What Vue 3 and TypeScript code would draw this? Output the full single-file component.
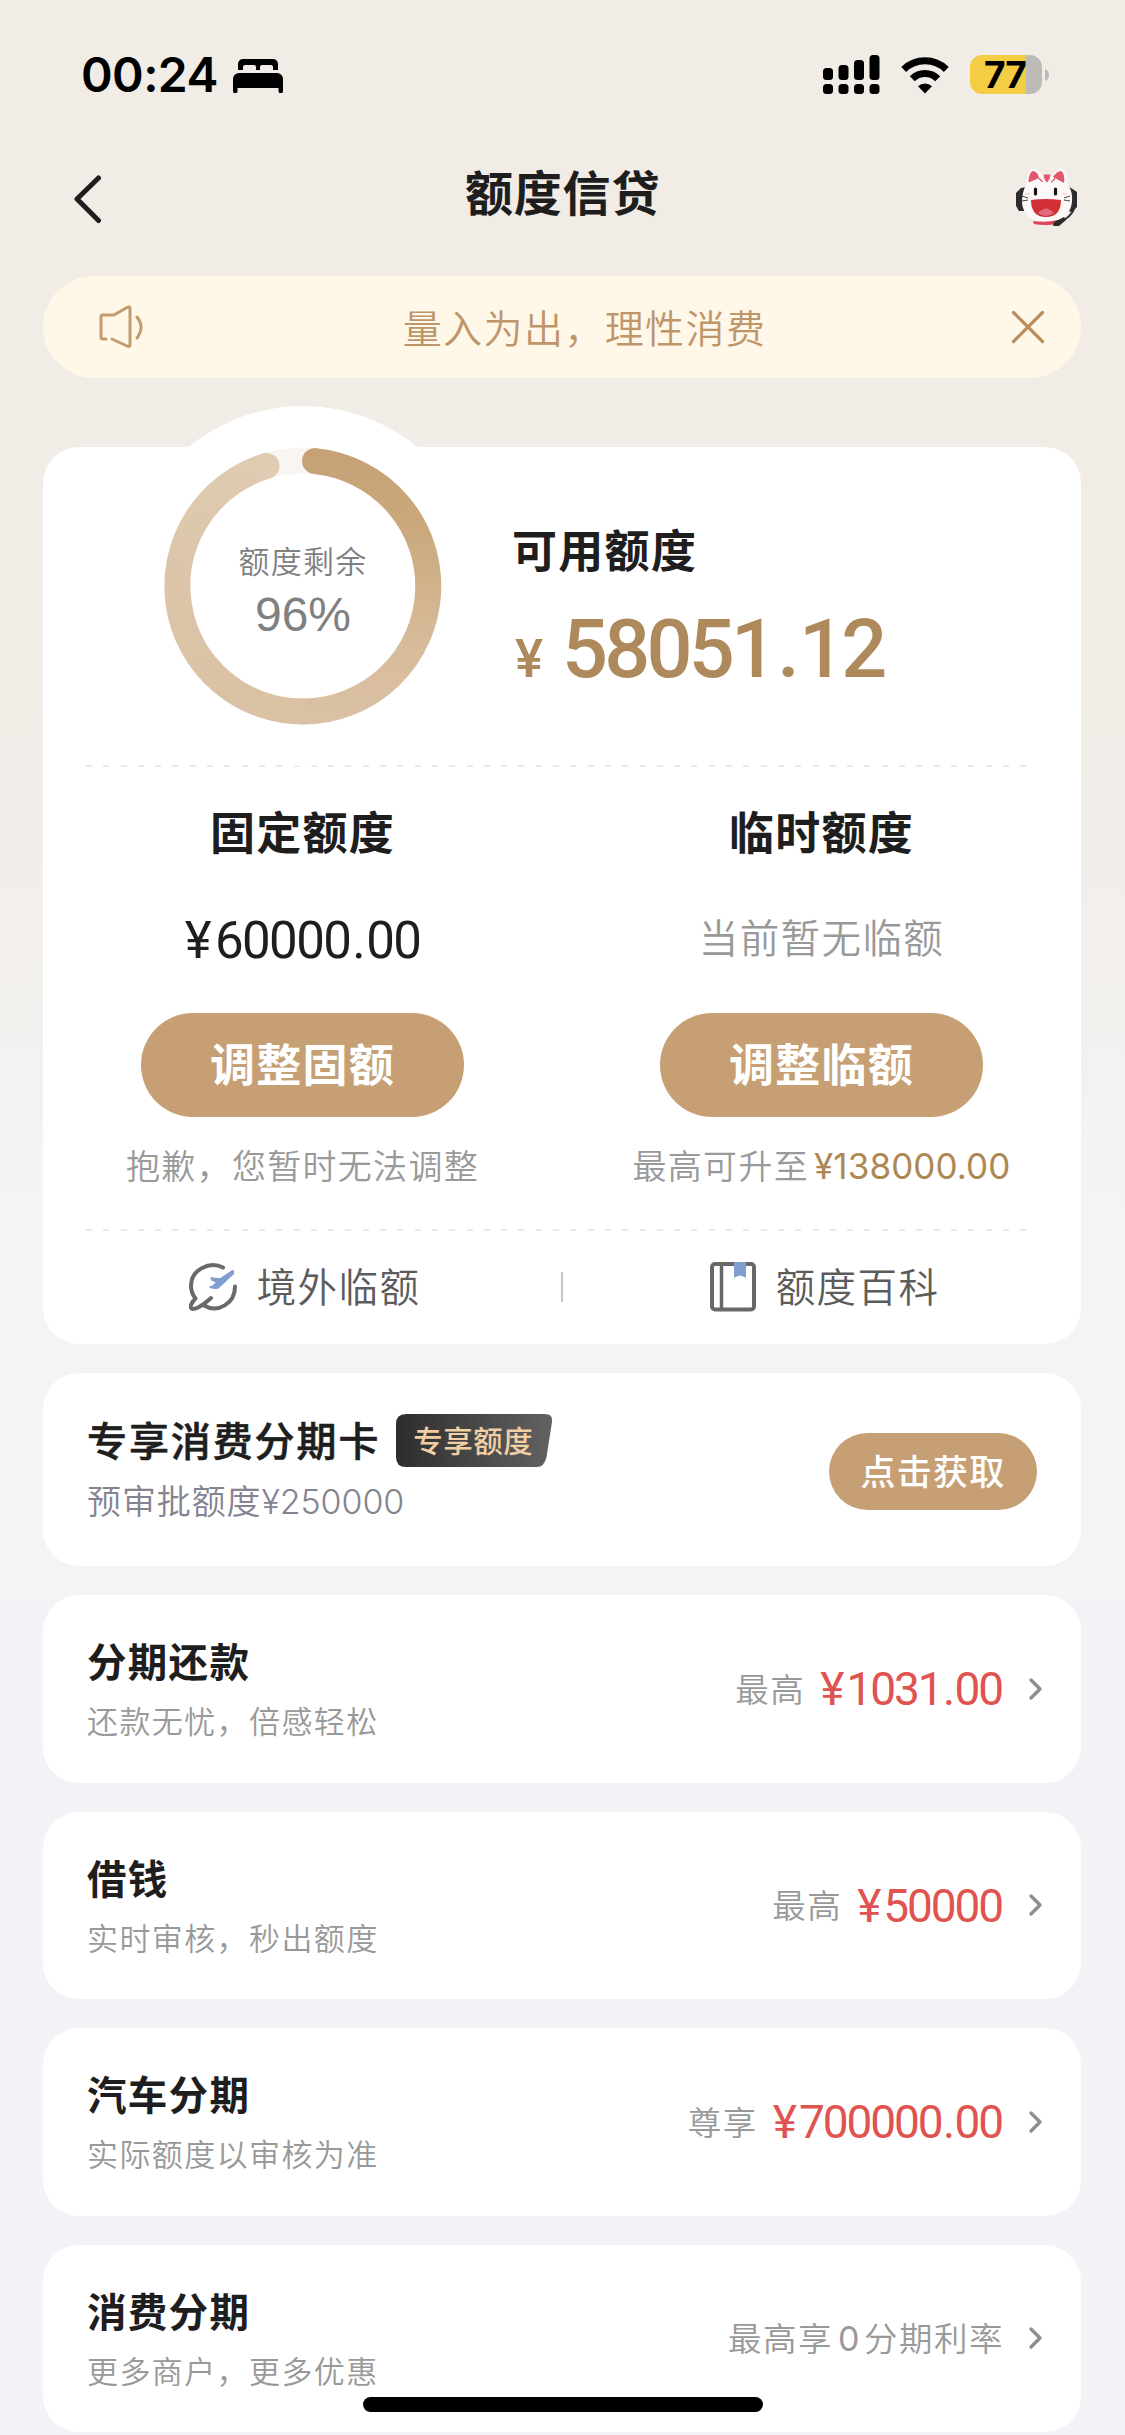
<script setup lang="ts">
interface LoanItem {
  title: string
  desc: string
  label: string
  rate?: string
  tail?: string
  amount?: string
  cents?: string
}

const loans: LoanItem[] = [
  { title: '分期还款', desc: '还款无忧，倍感轻松', label: '最高', amount: '1031', cents: '00' },
  { title: '借钱', desc: '实时审核，秒出额度', label: '最高', amount: '50000' },
  { title: '汽车分期', desc: '实际额度以审核为准', label: '尊享', amount: '700000', cents: '00' },
  { title: '消费分期', desc: '更多商户，更多优惠', label: '最高享', rate: '0', tail: '分期利率' },
]

const signalBars: number[] = [12, 15, 20, 25]
</script>

<template>
  <div class="page">
    <header class="status">
      <span class="time">00:24</span>
      <svg class="bed" width="50" height="34" viewBox="0 0 50 34">
        <path d="M5 11V5a5 5 0 0 1 5-5h30a5 5 0 0 1 5 5v6h-5V8a2 2 0 0 0-2-2h-9a2 2 0 0 0-2 2v3h-4V8a2 2 0 0 0-2-2h-9a2 2 0 0 0-2 2v3z" />
        <path d="M0 20a6 6 0 0 1 6-6h38a6 6 0 0 1 6 6v12a2 2 0 0 1-4.500 0v-3H4.500v3A2 2 0 0 1 0 32z" />
      </svg>
      <div class="status-right">
        <svg class="signal" width="57" height="40" viewBox="0 0 57 40">
          <template v-for="(h, i) in signalBars" :key="i">
            <rect :x="i * 15.5" :y="25 - h" width="10" :height="h" rx="3.500" />
            <rect :x="i * 15.5" y="29" width="10" height="10" rx="3.500" />
          </template>
        </svg>
        <svg class="wifi" width="48" height="38" viewBox="0 0 48 38">
          <g fill="none" stroke="#000" stroke-width="7">
            <path d="M2.700 13.500A30.500 30.500 0 0 1 45.300 13.500" />
            <path d="M11.300 22.800A18 18 0 0 1 36.700 22.800" />
          </g>
          <path d="M24 37.500l-7-7.200a10 10 0 0 1 14 0z" />
        </svg>
        <div class="battery"><span>77</span></div>
        <svg class="nub" width="4" height="12" viewBox="0 0 4 12"><path d="M0 0q4 1.500 4 6t-4 6z" fill="#bdbbb8" /></svg>
      </div>
    </header>

    <nav class="nav">
      <svg class="back" width="30" height="50" viewBox="0 0 30 50">
        <path d="M25.500 4L4 25l21.500 21.500" fill="none" stroke="#1e1e1e" stroke-width="5" stroke-linecap="round" stroke-linejoin="round" />
      </svg>
      <h1>额度信贷</h1>
      <svg class="cat" width="64" height="58" viewBox="0 0 64 58">
        <path d="M50 17l6 3 6 4v15l-5 5-5-1zM12 19L6 20l-5 5v13l3 5h6z" fill="#2c2c2c" />
        <path d="M11 17Q12 3 18 1q6 0 9 6h10q5-6 10-6 6 2 6 16 5 7 4 17-2 19-25 20Q9 54 7 35q0-11 4-18z" fill="#fbf8f7" />
        <path d="M13.500 14Q14 4 18 3q5 1 6 7l-9 4zM38 9q4-6 8-6 4 2 3 12z" fill="#e5566a" />
        <path d="M29 7h6l-1 4-2 3-2-3zM24 10l4 4-3-2zM40 10l-4 4 3-2z" fill="#e5566a" stroke="#e5566a" />
        <path d="M20.500 21v5M40.500 21v5" stroke="#181818" stroke-width="3.200" stroke-linecap="round" />
        <path d="M16 32q15-2 30 0 0 17-15 17T16 32z" fill="#cf2f35" />
        <path d="M23 45q8-9 16 0-8 6-16 0z" fill="#e36b7c" />
        <path d="M7 28l6 2M7 33l6-1M55 28l-6 2M55 33l-6-1" stroke="#444" />
        <path d="M10 26h5M47 26h5" stroke="#f6bcc2" />
        <path d="M18 53q13 2 25-1v4q-13 2-24 0z" fill="#de4259" />
        <path d="M59 41q-3 8-14 13" fill="none" stroke="#2c2c2c" stroke-width="2" />
        <path d="M39 54l10-5 2 3-7 6h-6z" fill="#2c2c2c" />
      </svg>
    </nav>

    <section class="notice">
      <svg width="47" height="44" viewBox="0 0 47 44" fill="none" stroke="#c49b6c" stroke-width="3" stroke-linecap="round" stroke-linejoin="round">
        <path d="M7 34H4q-2 0-2-2V12q0-2 2-2h11L28 2.500q3-1.500 3 1v36q0 3-3 1.500L13 34M38 12q8 10 0 21" />
      </svg>
      <p>量入为出，理性消费</p>
      <svg width="34" height="34" viewBox="0 0 34 34" fill="none" stroke="#b98f60" stroke-width="3.200" stroke-linecap="round">
        <path d="M2.500 2.500l29 29M31.500 2.500l-29 29" />
      </svg>
    </section>

    <section class="card quota">
      <div class="top">
        <div class="ring">
          <svg width="360" height="360" viewBox="0 0 360 360">
            <defs>
              <linearGradient id="gr" gradientUnits="userSpaceOnUse" x1="180" y1="42" x2="180" y2="318">
                <stop offset="0" stop-color="#c5a175" />
                <stop offset=".3" stop-color="#cba97d" />
                <stop offset=".75" stop-color="#d8bd9c" />
                <stop offset="1" stop-color="#dac1a4" />
              </linearGradient>
              <linearGradient id="gl" gradientUnits="userSpaceOnUse" x1="180" y1="42" x2="180" y2="318">
                <stop offset="0" stop-color="#dfccb3" />
                <stop offset=".4" stop-color="#dcc5aa" />
                <stop offset="1" stop-color="#dac1a4" />
              </linearGradient>
            </defs>
            <circle cx="180" cy="180" r="180" fill="#fff" />
            <circle cx="180" cy="180" r="125.500" fill="none" stroke="#f9f5f2" stroke-width="26" />
            <g fill="none" stroke-width="26">
              <path d="M192 55.100A125.500 125.500 0 0 1 180 305.500" stroke="url(#gr)" stroke-linecap="round" />
              <path d="M143.500 59.900A125.500 125.500 0 0 0 181 305.500" stroke="url(#gl)" />
            </g>
            <circle cx="143.500" cy="59.900" r="13" fill="#dfccb3" />
          </svg>
          <div class="ring-text">
            <span class="ring-label">额度剩余</span>
            <span class="ring-value">96%</span>
          </div>
        </div>
        <div class="avail">
          <h2>可用额度</h2>
          <p><i>¥</i><b>58051<u>.</u>12</b></p>
        </div>
      </div>
      <div class="dash"></div>
      <div class="cols">
        <div class="col">
          <h2>固定额度</h2>
          <p class="fixed"><i>¥</i>60000<u>.</u>00</p>
          <button>调整固额</button>
          <p class="hint">抱歉，您暂时无法调整</p>
        </div>
        <div class="col">
          <h2>临时额度</h2>
          <p class="none">当前暂无临额</p>
          <button>调整临额</button>
          <p class="hint">最高可升至<em>¥138000.00</em></p>
        </div>
      </div>
      <div class="dash"></div>
      <div class="links">
        <a>
          <svg width="48" height="50" viewBox="0 0 48 50" fill="none" stroke="#696969" stroke-width="4" stroke-linecap="round" stroke-linejoin="round">
            <path d="M34 5.500C21-1 2 7 2 24c0 7 2 9 4.500 12.500C3 40 1 44 2 46c2 3 10-1 20-10M15 43.500c14 8 31-2 31-19" />
            <path d="M43 9L31 17l-9-1 1 2 5 2-4 4-3 1q4 2 8 1L44 12q1-4-1-3z" fill="#7f9fcf" stroke="#7f9fcf" stroke-width="1.500" />
          </svg>
          <span>境外临额</span>
        </a>
        <div class="bar"></div>
        <a>
          <svg width="46" height="50" viewBox="0 0 46 50" fill="none">
            <rect x="2" y="2" width="42" height="45.500" rx="3" stroke="#686868" stroke-width="4" />
            <path d="M11.500 2v45" stroke="#686868" stroke-width="3.500" />
            <path d="M24 0h12v15.500l-6-2-6 2z" fill="#7f9fcf" />
          </svg>
          <span>额度百科</span>
        </a>
      </div>
    </section>

    <section class="card exclusive">
      <div class="ex-text">
        <div class="ex-title">
          <h3>专享消费分期卡</h3>
          <div class="badge">
            <svg width="157" height="53" viewBox="0 0 157 53">
              <defs>
                <linearGradient id="bg" x1="0" x2="1" y1="0" y2="0">
                  <stop offset="0" stop-color="#2d2d2d" />
                  <stop offset="1" stop-color="#626262" />
                </linearGradient>
              </defs>
              <path d="M10 0H149q8 0 7 8l-5.500 35q-2 10-10 10H10Q0 53 0 43V10Q0 0 10 0z" fill="url(#bg)" />
            </svg>
            <span>专享额度</span>
          </div>
        </div>
        <p>预审批额度<em>¥250000</em></p>
      </div>
      <button>点击获取</button>
    </section>

    <section v-for="item in loans" :key="item.title" class="card loan">
      <div class="loan-text">
        <h3>{{ item.title }}</h3>
        <p>{{ item.desc }}</p>
      </div>
      <div class="loan-right">
        <span class="loan-label">{{ item.label }}<em v-if="item.rate">{{ item.rate }}</em>{{ item.tail }}</span>
        <span v-if="item.amount" class="amount"><i>¥</i>{{ item.amount }}<template v-if="item.cents"><u>.</u>{{ item.cents }}</template></span>
        <svg width="16" height="24" viewBox="0 0 16 24">
          <path d="M3 3l9 9-9 9" fill="none" stroke="#8e8e8e" stroke-width="3.400" stroke-linecap="round" stroke-linejoin="round" />
        </svg>
      </div>
    </section>
    <div class="home"></div>
  </div>
</template>

<style>
body {
  margin: 0;
}
</style>

<style scoped>
* {
  box-sizing: border-box;
}
.page {
  position: relative;
  width: 1125px;
  height: 2435px;
  overflow: hidden;
  padding: 0 44px 0 43px;
  font-family: "Noto Sans CJK SC", sans-serif;
  color: #1e1e1e;
  background: linear-gradient(180deg, #f1ece6 0, #f1ece6 700px, #f4f4f4 1220px, #f4f4f4 1598px, #f2f3f6 1599px);
}
h1, h2, h3, p {
  margin: 0;
  font-weight: 500;
  white-space: nowrap;
}
i, em {
  font-style: normal;
}
u {
  text-decoration: none;
}
svg {
  display: block;
  flex: none;
}
button {
  border: 0;
  padding: 0;
  background: #c6a074;
  color: #fff;
  font-family: inherit;
  font-weight: 700;
  white-space: nowrap;
}
.status {
  display: flex;
  height: 150px;
  padding: 55px 32px 0 38px;
}
.time {
  font: 600 48px/40px Inter, sans-serif;
  color: #000;
  width: 152px;
  letter-spacing: -0.600px;
}
.bed {
  margin-top: 4px;
}
.status-right {
  display: flex;
  margin-left: auto;
}
.signal {
  margin-right: 1px;
}
.wifi {
  margin: 1px 21px 0 20px;
}
.battery {
  width: 72px;
  height: 39px;
  border-radius: 12px;
  background: linear-gradient(90deg, #f5cd45 56px, #bdbbb8 56px);
}
.battery span {
  display: block;
  padding-left: 14px;
  font: 700 37px/39px Inter, sans-serif;
  color: #000;
  letter-spacing: -1px;
}
.nub {
  margin: 14px 0 0 3px;
}
.nav {
  display: flex;
  height: 126px;
  padding: 21px 0 0 30px;
}
.nav .back {
  margin-top: 3px;
}
.nav h1 {
  margin: -4px auto 0 362px;
  font-size: 48px;
  line-height: 46px;
  letter-spacing: 0.800px;
  font-weight: 700;
}
.nav .cat {
  margin: -3px 2px 0 0;
}
.notice {
  display: flex;
  align-items: center;
  justify-content: space-between;
  height: 102px;
  border-radius: 51px;
  padding: 0 36px 0 56px;
  background: #fff7e8;
}
.notice p {
  padding-left: 12px;
  margin-top: -2px;
  font-size: 39px;
  line-height: 40px;
  letter-spacing: 1.400px;
  font-weight: 350;
  color: #be966a;
}
.card {
  border-radius: 36px;
  background: #fff;
}
.quota {
  margin-top: 69px;
  height: 897px;
}
.top {
  display: flex;
  height: 318px;
}
.ring {
  display: grid;
  width: 360px;
  height: 360px;
  margin: -41px 0 0 80px;
}
.ring > * {
  grid-area: 1 / 1;
}
.ring-text {
  display: flex;
  flex-direction: column;
  align-items: center;
  padding-top: 137px;
  color: #808080;
}
.ring-label {
  font-size: 31px;
  line-height: 34px;
  letter-spacing: 1.300px;
  font-weight: 350;
}
.ring-value {
  margin-top: 16px;
  font: 48px/44px "Liberation Sans", sans-serif;
}
.avail {
  padding: 79px 0 0 29px;
}
h2 {
  font-size: 45px;
  line-height: 46px;
  letter-spacing: 1.300px;
  font-weight: 700;
}
.avail p {
  display: flex;
  align-items: baseline;
  margin-top: 33px;
  height: 90px;
  line-height: 90px;
  font-family: Roboto, sans-serif;
  color: #ae895b;
}
.avail i {
  width: 50px;
  padding-left: 3px;
  font-size: 53px;
  font-weight: 500;
}
.avail b {
  font-size: 81px;
  font-weight: 500;
  letter-spacing: -3.800px;
}
.avail u {
  margin: 0 3px 0 4px;
}
.dash {
  height: 2px;
  margin: 0 55px 0 43px;
  background: repeating-linear-gradient(90deg, #e9e9e9 0, #e9e9e9 6px, transparent 6px, transparent 17.300px);
}
.cols {
  display: flex;
  height: 462px;
}
.col {
  display: flex;
  flex-direction: column;
  align-items: center;
  width: 519px;
  padding-top: 41px;
}
.fixed {
  height: 52px;
  margin-top: 61px;
  line-height: 52px;
  font-family: Roboto, sans-serif;
  font-size: 51px;
  font-weight: 400;
  letter-spacing: -1.600px;
}
.fixed i {
  margin-right: 5px;
}
.fixed u {
  margin: 0 2px;
}
.none {
  height: 52px;
  margin: 56px 0 5px;
  line-height: 52px;
  font-size: 39.500px;
  letter-spacing: 1.400px;
  font-weight: 350;
  color: #999;
}
.col button {
  width: 323px;
  height: 104px;
  margin-top: 46px;
  border-radius: 52px;
  font-size: 45px;
  line-height: 60px;
  padding-bottom: 4px;
  letter-spacing: 1.300px;
}
.hint {
  display: flex;
  align-items: center;
  margin-top: 28px;
  height: 40px;
  font-size: 34px;
  line-height: 40px;
  letter-spacing: 1.300px;
  font-weight: 350;
  color: #999;
}
.hint em {
  margin: 1px 0 0 5px;
  font: 400 35px/40px Inter, sans-serif;
  letter-spacing: 0.100px;
  color: #ad8855;
}
.links {
  display: flex;
  align-items: center;
  height: 113px;
  padding-bottom: 1px;
}
.links a {
  display: flex;
  align-items: center;
  flex: 1;
  justify-content: center;
  gap: 20px;
  padding-left: 5px;
  font-size: 39.500px;
  line-height: 46px;
  letter-spacing: 1.400px;
  font-weight: 350;
  color: #5c5c5c;
}
.links span {
  margin-top: -4px;
}
.links .bar {
  width: 2px;
  height: 30px;
  background: #c4c4c4;
}
.exclusive {
  display: flex;
  justify-content: space-between;
  height: 193px;
  margin-top: 29px;
  padding: 40px 44px 0 44px;
}
.ex-title {
  display: flex;
  height: 53px;
}
h3 {
  font-size: 40px;
  line-height: 52px;
  letter-spacing: 1.900px;
  font-weight: 500;
}
.exclusive h3 {
  -webkit-text-stroke: 0.600px #1e1e1e;
}
.badge {
  display: grid;
  margin: 1px 0 0 16px;
}
.badge > * {
  grid-area: 1 / 1;
}
.badge span {
  padding-left: 17px;
  font-size: 29.500px;
  line-height: 51px;
  letter-spacing: 0.500px;
  font-weight: 500;
  color: #f1cfa3;
}
.ex-text p {
  display: flex;
  margin-top: 14px;
  font-size: 34px;
  line-height: 40px;
  letter-spacing: 0.900px;
  font-weight: 350;
  color: #848391;
}
.ex-text em {
  font: 350 34px/43px Inter, sans-serif;
  letter-spacing: -0.100px;
}
.exclusive button {
  width: 208px;
  height: 77px;
  margin-top: 20px;
  padding-bottom: 3px;
  border-radius: 39px;
  font-size: 35px;
  line-height: 50px;
  letter-spacing: 1.200px;
  font-weight: 500;
}
.loan {
  display: flex;
  justify-content: space-between;
  height: 187.500px;
  margin-top: 29px;
  padding: 0 37px 0 44px;
}
.loan-text {
  padding-top: 39px;
}
.loan h3 {
  font-size: 39.500px;
  letter-spacing: 1.300px;
  font-weight: 700;
}
.loan p {
  margin-top: 14px;
  font-size: 31px;
  line-height: 40px;
  letter-spacing: 1.400px;
  font-weight: 350;
  color: #999;
}
.loan-right {
  display: flex;
  align-items: center;
}
.loan-label {
  margin-top: -2px;
  font-size: 33.500px;
  letter-spacing: 1.500px;
  line-height: 50px;
  font-weight: 350;
  color: #999;
}
.loan-label em {
  margin: 0 3px 0 5px;
  font: 400 34px/40px Inter, sans-serif;
}
.loan-label:has(em) {
  margin-right: -2px;
}
.amount {
  margin: 1px 0 0 15px;
  font: 400 46px/50px Roboto, sans-serif;
  letter-spacing: -2.100px;
  color: #df5350;
}
.amount i {
  margin-right: 4px;
}
.amount u {
  margin: 0 1.500px;
}
.loan-right svg {
  margin-left: 26px;
}
.home {
  position: absolute;
  left: 363px;
  top: 2397px;
  width: 400px;
  height: 15px;
  border-radius: 8px;
  background: #000;
}
</style>
